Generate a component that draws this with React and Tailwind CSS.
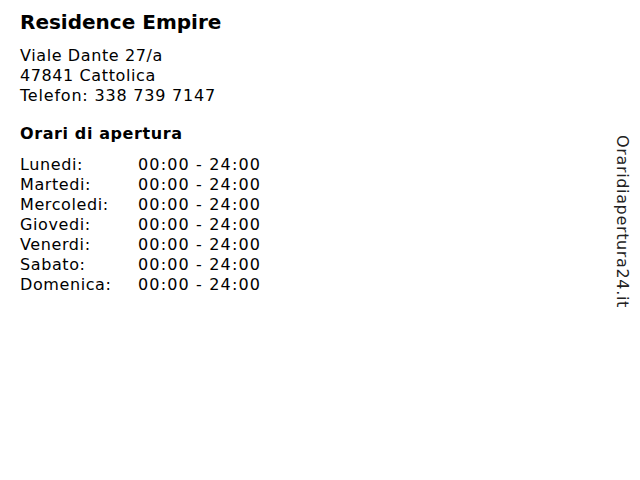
import React from 'react'

const hours = [
    ["Lunedi:", "00:00 - 24:00"],
    ["Martedi:", "00:00 - 24:00"],
    ["Mercoledi:", "00:00 - 24:00"],
    ["Giovedi:", "00:00 - 24:00"],
    ["Venerdi:", "00:00 - 24:00"],
    ["Sabato:", "00:00 - 24:00"],
    ["Domenica:", "00:00 - 24:00"],
];

function App(){
  return (
    <div className="flex w-[640px] h-[480px] bg-white text-black" style={{fontFamily:'"DejaVu Sans", sans-serif'}}>
        <div className="flex-1 pl-5 pt-[10px]">
            <h1 className="text-[20px] leading-[24px] font-bold">Residence Empire</h1>
            <div className="mt-[12px] text-[16px] leading-[20px]">
                <div className="tracking-[0.6px]">Viale Dante 27/a</div>
                <div className="tracking-[0.6px]">47841 Cattolica</div>
                <div className="tracking-[0.8px]">Telefon: 338 739 7147</div>
            </div>
            <h2 className="mt-[18px] text-[16px] leading-[20px] font-bold tracking-[0.6px]">Orari di apertura</h2>
            <div className="mt-[11px] text-[16px] leading-[20px]">
                {hours.map(([day,time])=>(
                    <div key={day} className="flex">
                        <span className="w-[118px] tracking-[0.6px]">{day}</span>
                        <span className="tracking-[1.15px]">{time}</span>
                    </div>
                ))}
            </div>
        </div>
        <div className="pt-[135px] pr-2">
            <div className="text-[16px] leading-[20px] tracking-[0.65px] text-[#222]" style={{writingMode:'vertical-rl'}}>Oraridiapertura24.it</div>
        </div>
    </div>
  )
}

export default App
